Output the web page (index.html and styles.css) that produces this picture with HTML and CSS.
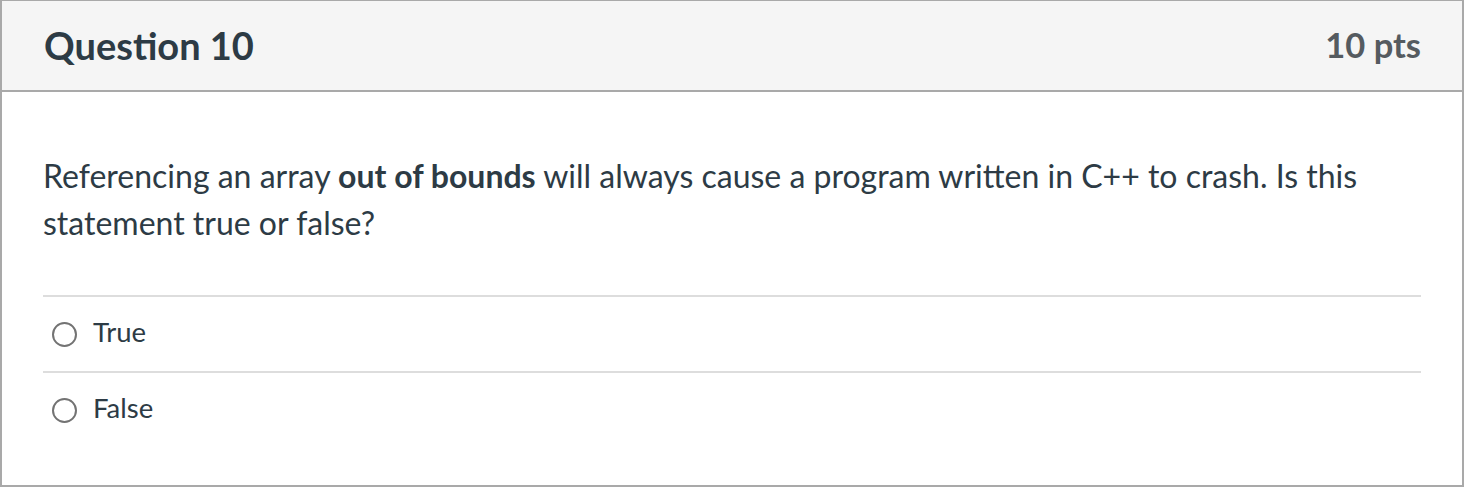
FILE: index.html
```html
<!DOCTYPE html>
<html>
<head>
<meta charset="utf-8">
<link rel="stylesheet" href="styles.css">
</head>
<body>
<div class="question">
  <div class="q-header">
    <h2 class="q-title">Question 10</h2>
    <span class="q-points">10 pts</span>
  </div>
  <div class="q-body">
    <p class="q-text">Referencing an array <strong>out of bounds</strong> will always cause a program written in C++ to crash. Is this statement true or false?</p>
    <div class="answers">
      <label class="answer"><span class="radio"></span><span class="answer-text">True</span></label>
      <label class="answer"><span class="radio"></span><span class="answer-text">False</span></label>
    </div>
  </div>
</div>
</body>
</html>
```
FILE: styles.css
```css
html, body {
  margin: 0;
  padding: 0;
  background: #ffffff;
}
body {
  font-family: Lato, "Noto Sans", sans-serif;
  color: #2d3b45;
}
.question {
  width: 1460px;
  border: 2px solid #a9a9a9;
  border-top-width: 1px;
  background: #fff;
}
.q-header {
  height: 87px;
  background: #f5f5f5;
  border-bottom: 2px solid #a9a9a9;
  display: flex;
  align-items: center;
  justify-content: space-between;
  padding: 0 41px 2px 42px;
}
.q-title {
  margin: 0;
  font-size: 38px;
  font-weight: 700;
  color: #2d3b45;
}
.q-points {
  font-size: 34.5px;
  font-weight: 700;
  color: #555b60;
}
.q-body {
  padding: 60px 41px 38px;
}
.q-text {
  margin: 0 0 49px;
  font-size: 32px;
  line-height: 47px;
}
.q-text strong {
  font-weight: 700;
}
.answer {
  display: flex;
  align-items: center;
  height: 74px;
  border-top: 2px solid #dddddd;
  padding-left: 9px;
}
.radio {
  width: 21px;
  height: 21px;
  border: 2px solid #737373;
  border-radius: 50%;
  box-sizing: content-box;
  margin-right: 16px;
  flex: none;
}
.answer-text {
  font-size: 27.5px;
  line-height: 1.2;
  margin-bottom: 6px;
}
```
